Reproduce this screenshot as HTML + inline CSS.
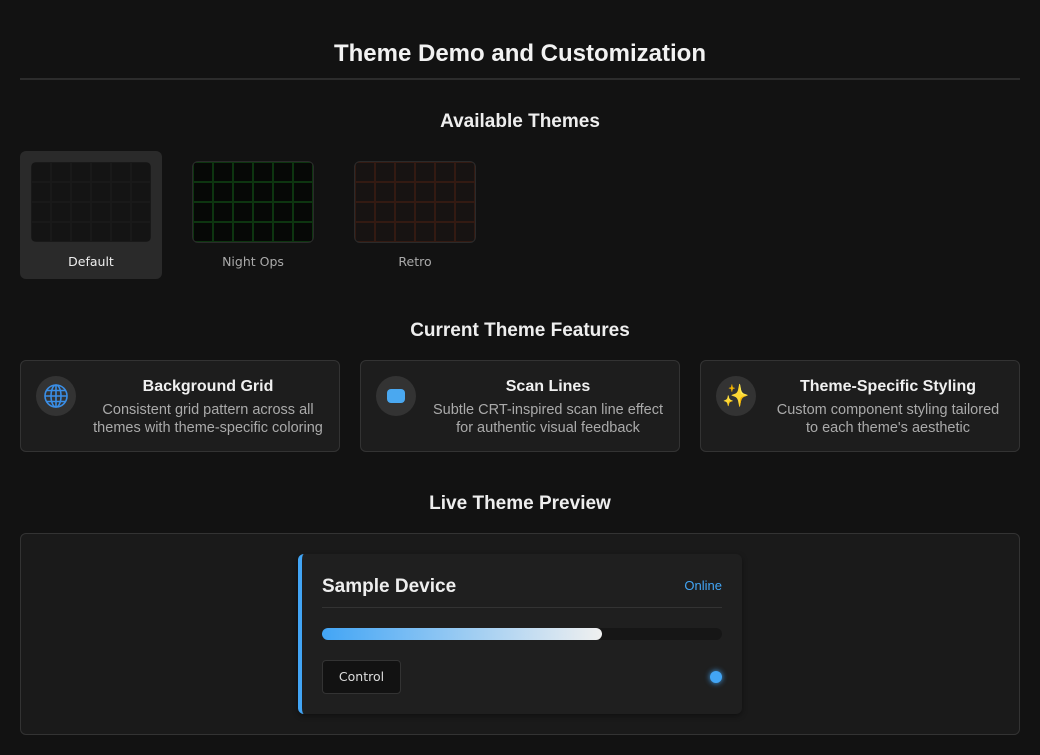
<!DOCTYPE html>
<html><head><style>
*{box-sizing:border-box;margin:0;padding:0}
body{width:1040px;height:755px;background:#121212;color:#eee;font-family:"Liberation Sans",sans-serif;position:relative;overflow:hidden}
.abs{position:absolute}
h1{position:absolute;left:20px;width:1000px;top:40px;text-align:center;font-size:24px;font-weight:bold;color:#f2f2f2}
.hr{position:absolute;left:20px;width:1000px;top:78px;height:2px;background:#2c2c2c}
h2{position:absolute;left:0;width:1040px;text-align:center;font-size:19px;font-weight:bold;color:#eee}
.tcard{position:absolute;top:151px;width:142px;height:128px;border-radius:6px}
.thumb{position:absolute;left:10px;top:10px;width:122px;height:82px;border-radius:6px;border:1px solid #2a2a2a;background-size:20px 20px;background-position:-1px -1px}
.tlabel{position:absolute;left:0;width:142px;top:103px;text-align:center;font-family:"DejaVu Sans",sans-serif;font-size:12.5px;color:#aaa}
.fcard{position:absolute;top:360px;width:320px;height:92px;background:#1d1d1d;border:1px solid #333;border-radius:6px}
.ic{position:absolute;left:15px;top:15px;width:40px;height:40px;border-radius:50%;background:#333;display:flex;align-items:center;justify-content:center}
.ft{position:absolute;left:62px;right:6px;top:17px;text-align:center}
.ft b{display:block;font-size:16px;color:#f0f0f0;margin-bottom:5px}
.ft span{display:block;font-size:14.5px;color:#aaa;line-height:18px}
</style></head><body>
<h1>Theme Demo and Customization</h1>
<div class="hr"></div>
<h2 style="top:111px">Available Themes</h2>
<div class="tcard" style="left:20px;background:#2a2a2a">
<div class="thumb" style="background-color:#141414;background-image:linear-gradient(#191919 2px,transparent 2px),linear-gradient(90deg,#191919 2px,transparent 2px)"></div>
<div class="tlabel" style="color:#eee">Default</div></div>
<div class="tcard" style="left:182px">
<div class="thumb" style="background-color:#060806;background-image:linear-gradient(#0d3510 2px,transparent 2px),linear-gradient(90deg,#0d3510 2px,transparent 2px)"></div>
<div class="tlabel">Night Ops</div></div>
<div class="tcard" style="left:344px">
<div class="thumb" style="background-color:#171312;background-image:linear-gradient(#331a12 2px,transparent 2px),linear-gradient(90deg,#331a12 2px,transparent 2px)"></div>
<div class="tlabel">Retro</div></div>

<h2 style="top:320px">Current Theme Features</h2>
<div class="fcard" style="left:20px"><div class="ic"><svg width="26" height="26" viewBox="0 0 26 26" fill="none" stroke="#3a8ee6" stroke-width="1.6"><circle cx="13" cy="13" r="11"/><ellipse cx="13" cy="13" rx="5" ry="11"/><path d="M2 13h22M4 7.5h18M4 18.5h18M13 2v22"/></svg></div>
<div class="ft"><b>Background Grid</b><span>Consistent grid pattern across all themes with theme-specific coloring</span></div></div>
<div class="fcard" style="left:360px"><div class="ic"><div style="width:18px;height:14px;border-radius:4px;background:#4aa8f0"></div></div>
<div class="ft"><b>Scan Lines</b><span>Subtle CRT-inspired scan line effect for authentic visual feedback</span></div></div>
<div class="fcard" style="left:700px"><div class="ic" style="font-size:22px">✨</div>
<div class="ft" style="left:70px;right:14px"><b>Theme-Specific Styling</b><span>Custom component styling tailored to each theme's aesthetic</span></div></div>

<h2 style="top:493px">Live Theme Preview</h2>
<div class="abs" style="left:20px;top:533px;width:1000px;height:202px;background:#1a1a1a;border:1px solid #333;border-radius:6px"></div>
<div class="abs" style="left:298px;top:554px;width:444px;height:160px;background:#1f1f1f;border-left:4px solid #42a5f5;border-radius:6px;box-shadow:0 2px 6px rgba(0,0,0,.4)">
<div class="abs" style="left:20px;top:22px;font-size:19px;font-weight:bold;color:#eee">Sample Device</div>
<div class="abs" style="right:20px;top:24px;font-size:13px;color:#42a5f5">Online</div>
<div class="abs" style="left:20px;right:20px;top:53px;height:1px;background:#333"></div>
<div class="abs" style="left:20px;right:20px;top:74px;height:12px;border-radius:6px;background:#161616"></div>
<div class="abs" style="left:20px;width:280px;top:74px;height:12px;border-radius:6px;background:linear-gradient(90deg,#42a5f5,#f0f0f0)"></div>
<div class="abs" style="left:20px;top:106px;width:79px;height:34px;border:1px solid #333;border-radius:4px;background:#121212;color:#ddd;font-family:'DejaVu Sans',sans-serif;font-size:12.5px;text-align:center;line-height:32px">Control</div>
<div class="abs" style="left:408px;top:117px;width:12px;height:12px;border-radius:50%;background:#42a5f5;box-shadow:0 0 6px #42a5f5"></div>
</div>
</body></html>
